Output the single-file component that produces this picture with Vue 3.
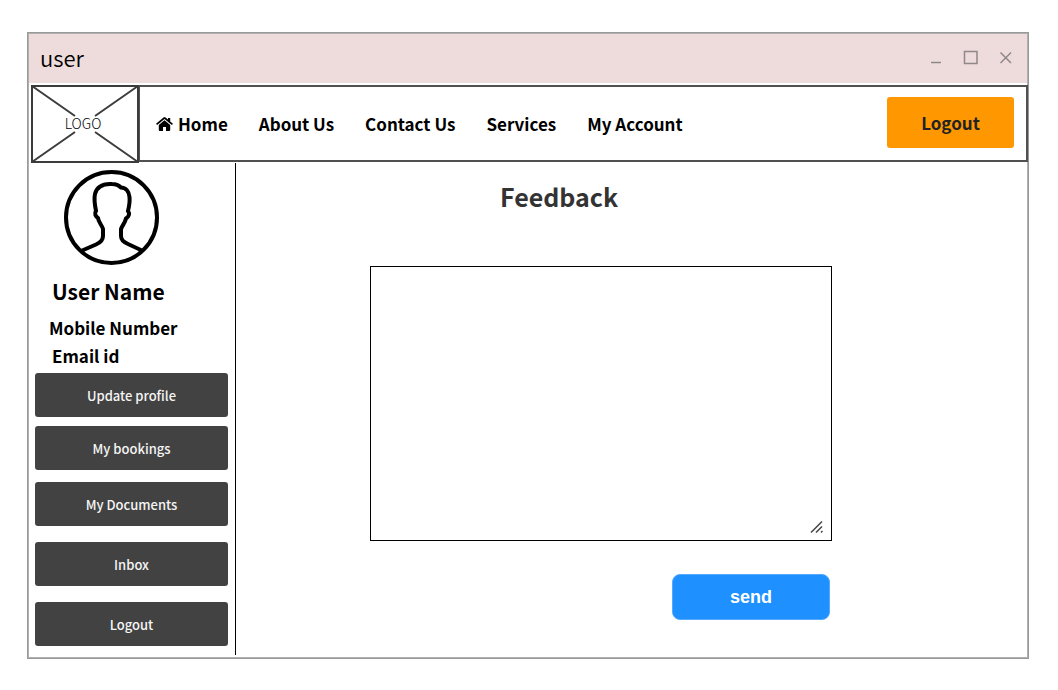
<script setup>
import { ref } from 'vue'

const message = ref('')
const links = ['About Us', 'Contact Us', 'Services', 'My Account']
const groups = [
  ['Update profile', 'My bookings'],
  ['My Documents', 'Inbox', 'Logout'],
]
</script>

<template>
  <div class="window">
    <header class="titlebar">
      <span class="title">user</span>
      <div class="controls">
        <button type="button" aria-label="Minimize">
          <svg width="16" height="16" viewBox="0 0 16 16"><path d="M3 12.500H13" /></svg>
        </button>
        <button type="button" aria-label="Maximize">
          <svg width="16" height="16" viewBox="0 0 16 16"><path d="M1.500 1.500H14V13.500H1.500Z" /></svg>
        </button>
        <button type="button" aria-label="Close">
          <svg width="16" height="16" viewBox="0 0 16 16"><path d="M2.500 2.500L13 13M13 2.500L2.500 13" /></svg>
        </button>
      </div>
    </header>

    <div class="topbar">
      <a class="logo" href="#" aria-label="Logo">
        <svg width="108" height="78" viewBox="0 0 108 78">
          <path d="M1 1H107V77H1Z" />
          <path d="M1 1L44 31M64 31L107 1M1 77L44 47M64 47L107 77" />
          <text x="52" y="44" text-anchor="middle">LOGO</text>
        </svg>
      </a>
      <nav class="nav">
        <a href="#" class="home">
          <svg width="17" height="14" viewBox="0 0 17 14">
            <path d="M8.500 3.200L2.800 8V13Q2.800 14 3.800 14H7V10H10V14H13.200Q14.200 14 14.200 13V8Z" />
            <path d="M8.500 0Q8 0 7.500 .4L.3 6.500Q0 6.800 .3 7.100L.8 7.700Q1.100 8 1.500 7.700L8.500 1.900L15.500 7.700Q15.900 8 16.200 7.700L16.700 7.100Q17 6.800 16.700 6.500L14.200 4.400V.9H12V2.500L9.500 .4Q9 0 8.500 0Z" />
          </svg>
          Home
        </a>
        <a v-for="link in links" :key="link" href="#">{{ link }}</a>
        <button type="button" class="logout">Logout</button>
      </nav>
    </div>

    <div class="body">
      <aside class="sidebar">
        <svg class="avatar" width="96" height="96" viewBox="0 0 96 96">
          <circle cx="47.500" cy="47.500" r="45.500" />
          <path d="M17 81L32 74.500Q39 71.500 39 66V59C38 55 34.500 52.500 34 48C31.500 46 30 43.500 32 41C31 36 30 28 31 24C33 16 40 13.500 48 14C52 14 55 15.500 57 17.500C62 17.500 65 22 65.500 27C66 32 65 37 64 41C66 43.500 65 46.500 62 48.500C61 53 58.500 55 57 59V66Q57 71 64 74L79 81" />
        </svg>
        <h2>User Name</h2>
        <p>Mobile Number</p>
        <p class="email">Email id</p>
        <div v-for="(group, i) in groups" :key="i" class="group">
          <button v-for="item in group" :key="item" type="button">{{ item }}</button>
        </div>
      </aside>

      <main class="main">
        <form @submit.prevent>
          <h1><label for="feedback">Feedback</label></h1>
          <div class="field">
            <textarea id="feedback" v-model="message"></textarea>
            <svg class="grip" width="14" height="14" viewBox="0 0 14 14">
              <path d="M1 12.500L12 1.500M6 12.500L12 6.500M11 12.500L12.500 11" />
            </svg>
          </div>
          <button type="submit" class="send">send</button>
        </form>
      </main>
    </div>
  </div>
</template>

<style>
body {
  background: #fff;
}
</style>

<style scoped>
* {
  box-sizing: border-box;
}

.window {
  margin: 32px 29px 31px 27px;
  padding: 1px;
  border: 1px solid #999;
  box-shadow: inset 0 0 0 1px #b0b0b0;
  font-family: "Noto Sans CJK SC", "Noto Sans", sans-serif;
  color: #000;
}

button {
  font-family: inherit;
  border: 0;
  padding: 0;
  cursor: pointer;
}

a {
  color: inherit;
  text-decoration: none;
}

.titlebar {
  display: flex;
  align-items: center;
  justify-content: space-between;
  height: 50px;
  padding: 0 13px 4px 11px;
  border-bottom: 1px solid #fff;
  background: #eedbdb;
}

.title {
  font-size: 22px;
  font-weight: 350;
  line-height: 32px;
}

.controls {
  display: flex;
  gap: 19px;
  padding-top: 3px;
}

.controls button {
  display: block;
  width: 16px;
  height: 16px;
  background: none;
}

.controls svg {
  display: block;
  fill: none;
  stroke: #8e8888;
  stroke-width: 1.5;
}

.topbar {
  display: flex;
  align-items: flex-start;
  margin-right: -1px;
  padding: 1px 0 0 2px;
}

.logo svg {
  display: block;
  fill: none;
  stroke: #3c3c3c;
  stroke-width: 2;
}

.logo text {
  fill: #000;
  stroke: none;
  font-size: 14px;
  font-weight: 300;
}

.nav {
  flex: 1;
  display: flex;
  align-items: center;
  gap: 31px;
  height: 77px;
  padding: 0 12px 2px 16px;
  border: 2px solid #505050;
  border-left-width: 1px;
  font-size: 17px;
  font-weight: 700;
  line-height: 24px;
}

.home {
  display: flex;
  align-items: center;
  gap: 5px;
}

.nav a {
  padding-top: 2px;
}

.logout {
  width: 127px;
  height: 51px;
  margin-left: auto;
  border-radius: 3px;
  background: #ff9800;
  color: #222;
  font-size: 17px;
  font-weight: 700;
}

.body {
  display: flex;
}

.sidebar {
  width: 207px;
  margin-bottom: 2px;
  padding: 7px 7px 9px 6px;
  border-right: 1px solid #000;
}

.avatar {
  display: block;
  margin-left: 29px;
  fill: none;
  stroke: #000;
  stroke-width: 4;
}

.sidebar h2 {
  margin: 10px 0 8px 17px;
  font-size: 21px;
  font-weight: 700;
  line-height: 30px;
}

.sidebar p {
  margin: 0 0 0 14px;
  font-size: 17px;
  font-weight: 700;
  line-height: 28px;
}

.sidebar .email {
  margin-left: 17px;
}

.group {
  display: flex;
  flex-direction: column;
  gap: 9px;
  margin-top: 3px;
}

.group + .group {
  gap: 16px;
  margin-top: 12px;
}

.group button {
  height: 44px;
  border-radius: 3px;
  background: #424242;
  color: #f5f5f5;
  font-size: 13px;
  font-weight: 500;
}

.main {
  flex: 1;
  padding: 15px 195px 0 134px;
}

.main h1 {
  margin: 0 0 52px 130px;
  color: #333;
  font-size: 25px;
  font-weight: 700;
  line-height: 36px;
}

.field {
  position: relative;
}

textarea {
  display: block;
  width: 100%;
  height: 275px;
  padding: 12px;
  border: 1px solid #000;
  border-radius: 0;
  resize: none;
  font: 16px/24px "Liberation Sans", sans-serif;
}

.grip {
  position: absolute;
  right: 8px;
  bottom: 7px;
  fill: none;
  stroke: #444;
  stroke-width: 1.5;
  pointer-events: none;
}

.send {
  display: block;
  width: 158px;
  height: 46px;
  margin: 33px 2px 0 auto;
  border: 1px solid #55a9ff;
  border-radius: 8px;
  background: #1e90ff;
  color: #fff;
  font: bold 18px/24px "Liberation Sans", sans-serif;
}
</style>
